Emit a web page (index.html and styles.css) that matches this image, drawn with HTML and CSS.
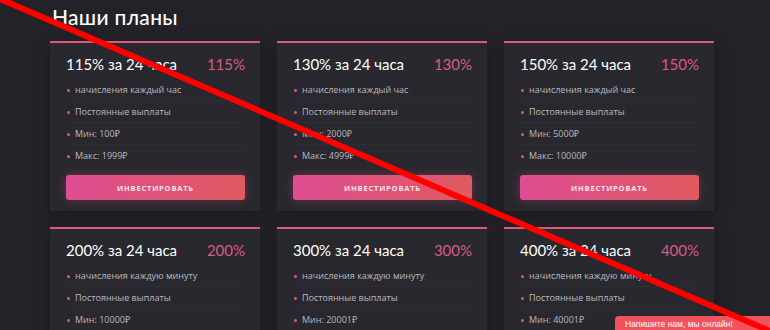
FILE: index.html
```html
<!DOCTYPE html>
<html lang="ru">

<head>
    <meta charset="UTF-8" />
    <meta name="viewport" content="width=device-width, initial-scale=1.0" />
    <title>Наши планы</title>
    <link rel="stylesheet" href="styles.css">
</head>

<body>
    <section class="plans">
        <h2>Наши планы</h2>
        <div class="plan-grid">
            <div class="plan">
                <div class="plan-head"><span>115% за 24 часа</span><span class="plan-rate">115%</span></div>
                <ul class="plan-list">
                    <li>начисления каждый час</li>
                    <li>Постоянные выплаты</li>
                    <li>Мин: 100₽</li>
                    <li>Макс: 1999₽</li>
                </ul>
                <button class="invest">Инвестировать</button>
            </div>
            <div class="plan">
                <div class="plan-head"><span>130% за 24 часа</span><span class="plan-rate">130%</span></div>
                <ul class="plan-list">
                    <li>начисления каждый час</li>
                    <li>Постоянные выплаты</li>
                    <li>Мин: 2000₽</li>
                    <li>Макс: 4999₽</li>
                </ul>
                <button class="invest">Инвестировать</button>
            </div>
            <div class="plan">
                <div class="plan-head"><span>150% за 24 часа</span><span class="plan-rate">150%</span></div>
                <ul class="plan-list">
                    <li>начисления каждый час</li>
                    <li>Постоянные выплаты</li>
                    <li>Мин: 5000₽</li>
                    <li>Макс: 10000₽</li>
                </ul>
                <button class="invest">Инвестировать</button>
            </div>
            <div class="plan">
                <div class="plan-head"><span>200% за 24 часа</span><span class="plan-rate">200%</span></div>
                <ul class="plan-list">
                    <li>начисления каждую минуту</li>
                    <li>Постоянные выплаты</li>
                    <li>Мин: 10000₽</li>
                </ul>
            </div>
            <div class="plan">
                <div class="plan-head"><span>300% за 24 часа</span><span class="plan-rate">300%</span></div>
                <ul class="plan-list">
                    <li>начисления каждую минуту</li>
                    <li>Постоянные выплаты</li>
                    <li>Мин: 20001₽</li>
                </ul>
            </div>
            <div class="plan">
                <div class="plan-head"><span>400% за 24 часа</span><span class="plan-rate">400%</span></div>
                <ul class="plan-list">
                    <li>начисления каждую минуту</li>
                    <li>Постоянные выплаты</li>
                    <li>Мин: 40001₽</li>
                </ul>
            </div>
        </div>
    </section>

    <!-- чат -->
    <div class="chat">Напишите нам, мы онлайн!</div>

    <svg class="strike" width="770" height="330" viewBox="0 0 770 330">
        <line x1="-2" y1="-2" x2="772" y2="332" stroke="#ff0000" stroke-width="6" />
    </svg>
</body>

</html>
```

FILE: styles.css
```css
body {
    margin: 0;
    background: #232228;
    color: #f2f2f2;
    font-family: 'Open Sans', 'Noto Sans', sans-serif;
    overflow: hidden;
    height: 330px;
}

.plans {
    padding: 0 0 0 50px;
}

h2 {
    margin: 0;
    padding: 4px 0 0 2px;
    height: 41px;
    box-sizing: border-box;
    font-family: 'Lato', 'Noto Sans', sans-serif;
    font-weight: 500;
    font-size: 21px;
    letter-spacing: 0.3px;
    color: #fff;
}

.plan-grid {
    display: grid;
    grid-template-columns: repeat(3, 210px);
    column-gap: 17px;
    row-gap: 16px;
}

.plan {
    background: #29282e;
    border-top: 2px solid #e0577c;
    padding: 10px 15px 12px 16px;
    box-shadow: 0 4px 14px rgba(0, 0, 0, 0.25);
    height: 170px;
    box-sizing: border-box;
    overflow: hidden;
}

.plan-head {
    display: flex;
    justify-content: space-between;
    align-items: center;
    height: 22px;
    font-family: 'Lato', 'Noto Sans', sans-serif;
    font-size: 15px;
    color: #fff;
}

.plan-rate {
    color: #d95a86;
}

.plan-list {
    list-style: none;
    margin: 4px 0 0;
    padding: 0;
}

.plan-list li {
    position: relative;
    height: 22px;
    line-height: 22px;
    padding-left: 9px;
    font-size: 9px;
    color: #b9b8be;
    border-bottom: 1px solid #2f2e35;
    box-sizing: border-box;
}

.plan-list li:last-child {
    border-bottom: none;
}

.plan-list li::before {
    content: '';
    position: absolute;
    left: 1px;
    top: 10px;
    width: 3px;
    height: 3px;
    border-radius: 50%;
    background: #e0577c;
}

.invest {
    display: block;
    width: 100%;
    height: 25px;
    margin-top: 8px;
    border: none;
    border-radius: 3px;
    background: linear-gradient(90deg, #df4d93, #e05a60);
    box-shadow: 0 0 10px rgba(224, 80, 120, 0.35);
    color: #f5e8ec;
    font-family: 'Open Sans', sans-serif;
    font-weight: 700;
    font-size: 7.5px;
    letter-spacing: 0.8px;
    text-transform: uppercase;
    cursor: pointer;
}

.chat {
    position: fixed;
    left: 615px;
    top: 316px;
    width: 155px;
    height: 20px;
    padding: 3px 0 0 10px;
    box-sizing: border-box;
    background: #f1535e;
    border-radius: 4px 0 0 0;
    color: #fff;
    font-family: 'Liberation Sans', Arial, sans-serif;
    font-size: 8.5px;
}

.strike {
    position: fixed;
    left: 0;
    top: 0;
    pointer-events: none;
}
```
